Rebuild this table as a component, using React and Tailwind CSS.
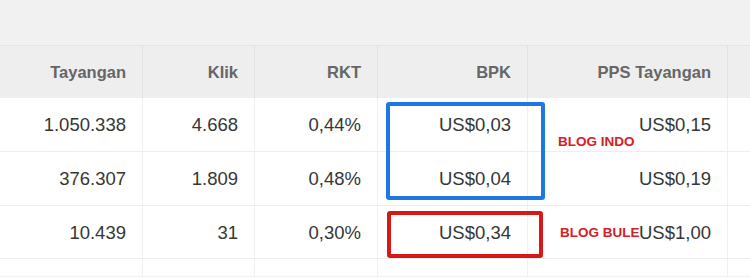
import React from "react";

const cols = [
  "w-[143px]",
  "w-[112px]",
  "w-[123px]",
  "w-[150px]",
  "w-[200px]",
  "flex-1",
];

const headers = ["Tayangan", "Klik", "RKT", "BPK", "PPS Tayangan", ""];

const rows = [
  { h: "h-[54px]", v: ["1.050.338", "4.668", "0,44%", "US$0,03", "US$0,15", ""] },
  { h: "h-[54px]", v: ["376.307", "1.809", "0,48%", "US$0,04", "US$0,19", ""] },
  { h: "h-[53px]", v: ["10.439", "31", "0,30%", "US$0,34", "US$1,00", ""] },
  { h: "h-[18px]", v: ["", "", "", "", "", ""] },
];

export default function App() {
  return (
    <div
      className="relative w-[750px] h-[277px] overflow-hidden bg-white"
      style={{ fontFamily: '"Liberation Sans", Arial, sans-serif' }}
    >
      <div className="h-[45px] bg-[#f1f1f1]" />
      <div className="flex h-[53px] bg-[#eeeeee] border-t border-[#e4e4e4]">
        {headers.map((t, i) => (
          <div
            key={i}
            className={`${cols[i]} flex items-center justify-end pr-4 text-[16.5px] font-bold text-[#666666] ${i < 5 ? "border-r border-[#e2e2e2]" : ""}`}
          >
            {t}
          </div>
        ))}
      </div>
      {rows.map((r, ri) => (
        <div key={ri} className={`flex ${r.h} border-b border-[#eeeeee]`}>
          {r.v.map((t, i) => (
            <div
              key={i}
              className={`${cols[i]} flex items-center justify-end pr-4 pt-px text-[18.5px] text-[#363636] ${i < 5 ? "border-r border-[#f0f0f0]" : ""}`}
            >
              {t}
            </div>
          ))}
        </div>
      ))}

      <div className="absolute left-[386px] top-[102px] w-[159px] h-[98px] border-[4px] border-[#1f78e0] rounded-[3px]" />
      <div className="absolute left-[387px] top-[211px] w-[156px] h-[47px] border-[4px] border-[#d81818] rounded-[3px]" />

      <div className="absolute left-[558px] top-[133px] text-[13.5px] font-bold text-[#d42026] leading-[18px]">
        BLOG INDO
      </div>
      <div className="absolute left-[560px] top-[224px] text-[13.5px] font-bold text-[#d42026] leading-[18px]">
        BLOG BULE
      </div>
    </div>
  );
}
